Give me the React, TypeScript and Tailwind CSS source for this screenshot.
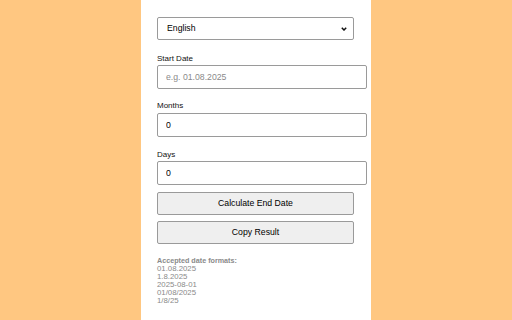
import { useState } from 'react';

const formats = ['01.08.2025', '1.8.2025', '2025-08-01', '01/08/2025', '1/8/25'];

export default function App() {
  const [lang, setLang] = useState('en');
  const [start, setStart] = useState('');
  const [months, setMonths] = useState('0');
  const [days, setDays] = useState('0');

  return (
    <div className="min-h-screen bg-[#ffc781] flex justify-center font-['Liberation_Sans',Arial,sans-serif] text-black">
      <div className="w-[230px] min-h-screen bg-white pl-[16px] pt-[17px]">
        <div className="relative w-[197px]">
          <select
            value={lang}
            onChange={e => setLang(e.target.value)}
            className="appearance-none block w-[197px] h-[23px] border border-[#9a9a9a] rounded-[2px] bg-white pl-[9px] text-[8.7px] outline-none"
          >
            <option value="en">English</option>
            <option value="de">Deutsch</option>
          </select>
          <svg className="absolute right-[7px] top-[10px] pointer-events-none" width="6" height="4" viewBox="0 0 6 4" fill="none">
            <path d="M0.8 0.8L3 3L5.2 0.8" stroke="#111" strokeWidth="1.5" />
          </svg>
        </div>

        <label className="block mt-[14px] mb-[1px] text-[8px] leading-[10px] text-[#111]">Start Date</label>
        <input
          value={start}
          onChange={e => setStart(e.target.value)}
          placeholder="e.g. 01.08.2025"
          className="block w-[210px] h-[24px] border border-[#9a9a9a] rounded-[2px] px-[8px] text-[8.7px] placeholder:text-[#8a8a8a] outline-none"
        />

        <label className="block mt-[12px] mb-[2px] text-[8px] leading-[10px] text-[#111]">Months</label>
        <input
          value={months}
          onChange={e => setMonths(e.target.value)}
          className="block w-[210px] h-[24px] border border-[#9a9a9a] rounded-[2px] px-[8px] text-[8.7px] outline-none"
        />

        <label className="block mt-[13px] mb-[1px] text-[8px] leading-[10px] text-[#111]">Days</label>
        <input
          value={days}
          onChange={e => setDays(e.target.value)}
          className="block w-[210px] h-[24px] border border-[#9a9a9a] rounded-[2px] px-[8px] text-[8.7px] outline-none"
        />

        <button className="block mt-[7px] w-[197px] h-[23px] bg-[#efefef] border border-[#9a9a9a] rounded-[2px] text-[8.7px]">
          Calculate End Date
        </button>
        <button className="block mt-[6px] w-[197px] h-[23px] bg-[#efefef] border border-[#9a9a9a] rounded-[2px] text-[8.7px]">
          Copy Result
        </button>

        <div className="mt-[13px] text-[7.8px] leading-[8px] text-[#8a8a8a]">
          <div className="font-bold text-[7.2px]">Accepted date formats:</div>
          {formats.map(f => (
            <div key={f}>{f}</div>
          ))}
        </div>
      </div>
    </div>
  );
}
